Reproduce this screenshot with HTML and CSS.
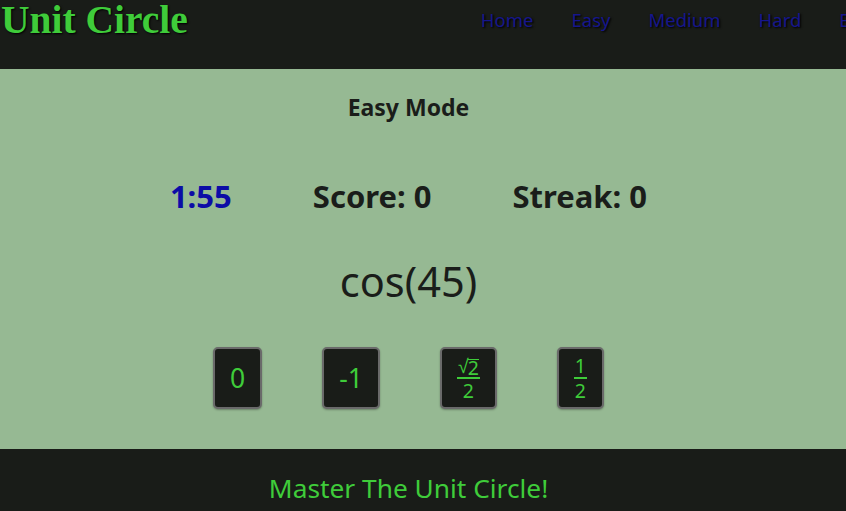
FILE: index.html
```html
<!DOCTYPE html>
<html lang="en">
<head>
<meta charset="utf-8">
<title>Unit Circle</title>
<link rel="stylesheet" href="styles.css">
</head>
<body>
<header class="site-header">
  <h1 class="logo">Unit Circle</h1>
  <nav class="nav">
    <a href="#" class="nav-link">Home</a>
    <a href="#" class="nav-link">Easy</a>
    <a href="#" class="nav-link">Medium</a>
    <a href="#" class="nav-link">Hard</a>
    <a href="#" class="nav-link">Expert</a>
  </nav>
</header>
<main class="game">
  <div class="inner">
    <h3 class="mode">Easy Mode</h3>
    <div class="stats">
      <span class="timer">1:55</span>
      <span class="stat">Score: 0</span>
      <span class="stat">Streak: 0</span>
    </div>
    <div class="question">cos(45)</div>
    <div class="answers">
      <button class="answer">0</button>
      <button class="answer">-1</button>
      <button class="answer"><span class="frac"><span class="num"><span class="root">√</span><span class="radicand">2</span></span><span class="den">2</span></span></button>
      <button class="answer"><span class="frac"><span class="num">1</span><span class="den">2</span></span></button>
    </div>
  </div>
</main>
<footer class="site-footer">
  <p class="tagline">Master The Unit Circle!</p>
</footer>
</body>
</html>
```
FILE: styles.css
```css
html, body {
  margin: 0;
  padding: 0;
}
body {
  font-family: "Noto Sans", "Open Sans", sans-serif;
  background: #96b993;
  color: #1a1d1a;
  overflow: hidden;
}
.site-header {
  background: #191c18;
  height: 69px;
  display: flex;
  align-items: flex-start;
  white-space: nowrap;
  overflow: hidden;
}
.logo {
  margin: -3px 0 0;
  padding: 0 0 0 1px;
  font-family: "Liberation Serif", serif;
  font-weight: bold;
  font-size: 39.5px;
  line-height: 46px;
  color: #3fcc3a;
  text-shadow: 1px 1px 2px #000;
  flex-shrink: 0;
}
.nav {
  display: flex;
  gap: 38px;
  margin-left: 293px;
  padding-top: 7px;
  flex-shrink: 0;
}
.nav-link {
  color: #16168c;
  text-decoration: none;
  font-size: 18.5px;
  line-height: 26px;
  text-shadow: 1px 1px 2px #000;
  flex-shrink: 0;
}
.game {
  background: #96b993;
}
.inner {
  width: 817px;
  display: flex;
  flex-direction: column;
  align-items: center;
  padding: 23px 0 40px;
}
.mode {
  margin: 0;
  font-size: 23px;
  line-height: 30px;
  font-weight: bold;
}
.stats {
  display: flex;
  gap: 81px;
  margin-top: 54px;
  font-size: 31px;
  font-weight: bold;
  line-height: 40px;
}
.timer {
  color: #0c0ca6;
}
.question {
  margin-top: 40px;
  font-size: 41.5px;
  line-height: 50px;
}
.answers {
  display: flex;
  gap: 60px;
  margin-top: 41px;
  align-items: stretch;
}
.answer {
  background: #191c18;
  color: #3fcc3a;
  border: 2px solid #6a6a6a;
  border-radius: 5px;
  padding: 0 15px;
  height: 62px;
  font-family: "Noto Sans", sans-serif;
  font-size: 26.5px;
  display: flex;
  align-items: center;
  justify-content: center;
  box-shadow: 0 1px 2px rgba(0, 0, 0, 0.3);
}
.frac {
  display: flex;
  flex-direction: column;
  align-items: center;
  font-size: 19.5px;
  line-height: 20px;
}
.num {
  display: flex;
  align-items: flex-start;
  height: 20px;
  padding: 0 1px 1px;
  border-bottom: 2px solid #3fcc3a;
}
.root {
  line-height: 20px;
}
.radicand {
  display: block;
  margin-top: 3px;
  line-height: 16px;
  border-top: 1.5px solid #3fcc3a;
  margin-left: -1px;
}
.den {
  display: block;
  height: 20px;
  padding-top: 2px;
}
.site-footer {
  background: #191c18;
  height: 62px;
  width: 100%;
}
.tagline {
  width: 817px;
  margin: 0;
  padding-top: 24px;
  text-align: center;
  color: #3fcc3a;
  font-size: 26.3px;
  line-height: 30px;
}
```
